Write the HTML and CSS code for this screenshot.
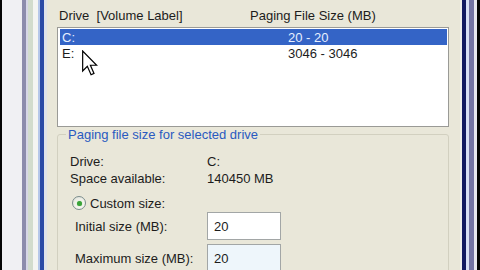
FILE: index.html
```html
<!DOCTYPE html>
<html>
<head>
<meta charset="utf-8">
<link rel="stylesheet" href="styles.css">
</head>
<body>
<div class="screen">
  <div class="frame-left"></div>
  <div class="dialog">
    <div class="list-head">
      <span class="col-drive">Drive&nbsp; [Volume Label]</span>
      <span class="col-size">Paging File Size (MB)</span>
    </div>
    <div class="listbox">
      <div class="row selected"><span class="col-drive">C:</span><span class="col-size">20 - 20</span></div>
      <div class="row"><span class="col-drive">E:</span><span class="col-size">3046 - 3046</span></div>
      <svg class="cursor" width="16" height="26" viewBox="0 0 12 19">
        <path d="M0.5 0.5 L0.5 15.5 L4 12 L6.8 18.3 L9 17.3 L6.3 11.2 L11 11.2 Z" fill="#fff" stroke="#000" stroke-width="0.9" stroke-linejoin="miter"/>
      </svg>
    </div>
    <fieldset class="group">
      <legend class="group-title">Paging file size for selected drive</legend>
      <div class="info-row first"><span class="info-label">Drive:</span><span>C:</span></div>
      <div class="info-row"><span class="info-label">Space available:</span><span>140450 MB</span></div>
      <div class="radio-row"><span class="radio"><span class="dot"></span></span><span>Custom size:</span></div>
      <div class="input-row"><span class="input-label">Initial size (MB):</span><span class="textbox">20</span></div>
      <div class="input-row second"><span class="input-label">Maximum size (MB):</span><span class="textbox focus">20</span></div>
    </fieldset>
  </div>
  <div class="frame-right"></div>
</div>
</body>
</html>
```
FILE: styles.css
```css
html, body {
  margin: 0;
  padding: 0;
  background: #000;
}
.screen {
  display: flex;
  width: 480px;
  height: 270px;
  overflow: hidden;
  font-family: "Liberation Sans", Arial, sans-serif;
  font-size: 13px;
  color: #1c1c1c;
}
.frame-left {
  width: 47px;
  flex: none;
  background: linear-gradient(to right,
    #050505 0 2px,
    #f0f0f3 2px 22px,
    #8c8cac 22px 26px,
    #d6d6e6 26px 28px,
    #d2dccd 28px 33px,
    #f4f5f2 33px 38px,
    #b6c8ea 38px 40px,
    #2a4aa6 40px 44px,
    #dfe3ea 44px 47px);
}
.frame-right {
  width: 20px;
  flex: none;
  background: linear-gradient(to right,
    #eeeeea 0 2px,
    #121a62 2px 6px,
    #d8e0f6 6px 9px,
    #7474a4 9px 14px,
    #e8e8f0 14px 17px,
    #050505 17px 20px);
}
.dialog {
  flex: 1;
  background: #e9e7d9;
  padding: 0 11px 0 10px;
  display: flex;
  flex-direction: column;
  overflow: hidden;
}
.dialog > * { flex: none; }
.list-head {
  height: 24px;
  padding-top: 3px;
  display: flex;
  align-items: center;
  padding-left: 2px;
}
.col-drive {
  width: 191px;
  flex: none;
}
.col-size {
  flex: none;
}
.listbox {
  position: relative;
  height: 97px;
  border: 1px solid #9a9a96;
  background: #fff;
  padding: 1px 1px 0 2px;
}
.row {
  height: 16px;
  display: flex;
  align-items: center;
  padding-left: 2px;
}
.row .col-drive { width: 226px; }
.row.selected {
  background: #3464c6;
  color: #e6f0ff;
}
.cursor {
  position: absolute;
  left: 24px;
  top: 22px;
}
.group {
  margin: 0;
  padding: 0 0 10px 0;
  min-width: 0;
  border: 1px solid #d2d0c0;
  border-radius: 3px;
}
.group-title {
  color: #2a5ac0;
  padding: 0 2px;
  margin-left: 8px;
  line-height: 15px;
}
.info-row {
  height: 17px;
  display: flex;
  align-items: center;
  padding-left: 12px;
}
.info-row.first { margin-top: 11px; }
.info-label {
  width: 137px;
  flex: none;
}
.radio-row {
  height: 18px;
  margin-top: 7px;
  display: flex;
  align-items: center;
  padding-left: 14px;
  gap: 4px;
}
.radio {
  width: 12px;
  height: 12px;
  border: 1px solid #7a8c8c;
  border-radius: 50%;
  background: radial-gradient(circle at 60% 65%, #f4f4ee 0 40%, #d8dcd2 100%);
  display: flex;
  align-items: center;
  justify-content: center;
  flex: none;
}
.dot {
  width: 5px;
  height: 5px;
  border-radius: 50%;
  background: #3aa23a;
  box-shadow: 0 0 1px #6cc86c;
}
.input-row {
  height: 28px;
  display: flex;
  align-items: center;
  padding-left: 17px;
}
.input-row.second { margin-top: 4px; }
.input-label {
  width: 132px;
  flex: none;
}
.textbox {
  width: 66px;
  height: 26px;
  border: 1px solid #a2a6a6;
  background: #fff;
  display: flex;
  align-items: center;
  padding-left: 6px;
  box-sizing: content-box;
}
.textbox.focus {
  background: #eef6fb;
}
```
